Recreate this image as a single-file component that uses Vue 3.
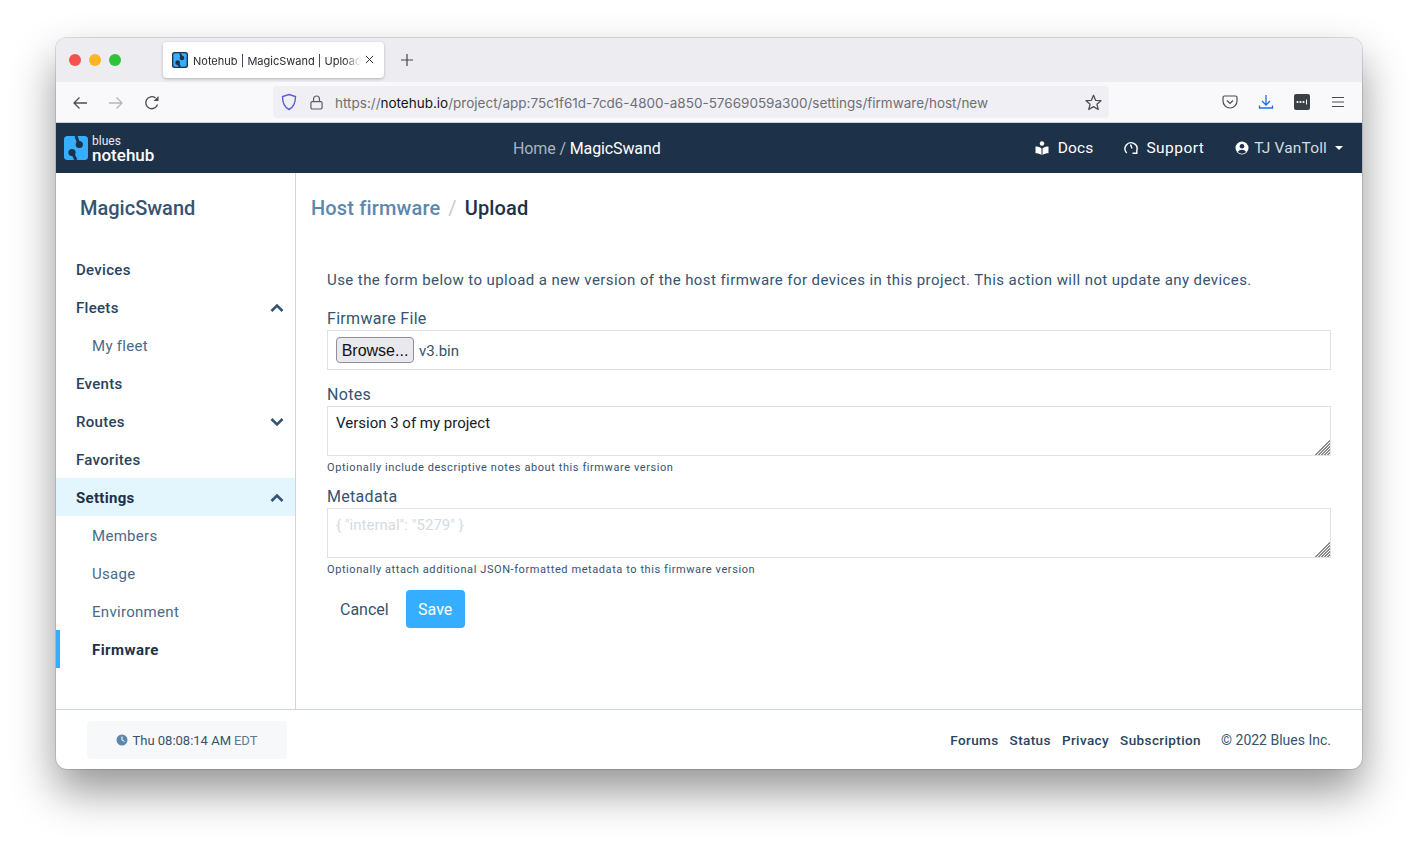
<template>
  <div class="stage">
    <div class="window">
      <div class="tabbar">
        <div class="lights">
          <span class="light red"></span>
          <span class="light yellow"></span>
          <span class="light green"></span>
        </div>
        <div class="tab">
          <svg class="favicon" viewBox="0 0 24 24">
            <rect width="24" height="24" rx="4" fill="#1d3149" />
            <rect x="2" y="2" width="20" height="20" rx="3" fill="#35aeff" />
            <path d="M12 2L15 8.500M8 16L12 22" stroke="#1d3149" stroke-width="3" fill="none" />
            <circle cx="15" cy="9" r="3.500" fill="#1d3149" />
            <circle cx="8.500" cy="16" r="3.500" fill="#1d3149" />
          </svg>
          <span class="tab-title">Notehub | MagicSwand | Upload</span>
          <svg class="tab-close" viewBox="0 0 10 10">
            <path d="M1 1L9 9M9 1L1 9" stroke="#2b2a33" stroke-width="1.100" fill="none" />
          </svg>
        </div>
        <svg class="new-tab" viewBox="0 0 12 12">
          <path d="M6 0V12M0 6H12" stroke="#45444d" stroke-width="1.200" fill="none" />
        </svg>
      </div>

      <div class="toolbar">
        <svg class="tool-icon back" viewBox="0 0 16 16">
          <path d="M15 8H2M7.500 2.500L2 8L7.500 13.500" stroke="#4d4c55" stroke-width="1.300" fill="none" />
        </svg>
        <svg class="tool-icon forward" viewBox="0 0 16 16">
          <path d="M1 8H14M8.500 2.500L14 8L8.500 13.500" stroke="#b5b5ba" stroke-width="1.300" fill="none" />
        </svg>
        <svg class="tool-icon reload" viewBox="0 0 16 16">
          <path d="M13.500 9.500A6 6 0 1 1 11.500 3" stroke="#4d4c55" stroke-width="1.300" fill="none" />
          <path d="M14.500 1V6H9.500Z" fill="#4d4c55" />
        </svg>
        <div class="urlbar">
          <svg class="shield" viewBox="0 0 16 18">
            <path d="M8 1.500L14.500 3.500C14.500 10 13 14 8 16.500C3 14 1.500 10 1.500 3.500Z" stroke="#5b5bd6" stroke-width="1.400" fill="none" />
          </svg>
          <svg class="lock" viewBox="0 0 14 16">
            <rect x="1" y="7" width="12" height="8" rx="1.500" stroke="#5b5b66" stroke-width="1.300" fill="none" />
            <path d="M3.800 7V4.200A3.200 3.200 0 0 1 10.200 4.200V7" stroke="#5b5b66" stroke-width="1.300" fill="none" />
          </svg>
          <span class="url"><span class="dim">https://</span>notehub.io<span class="dim">/project/app:75c1f61d-7cd6-4800-a850-57669059a300/settings/firmware/host/new</span></span>
          <svg class="star" viewBox="0 0 16 16">
            <path d="M8 1.200L10 5.900L15 6.300L11.200 9.600L12.400 14.600L8 11.900L3.600 14.600L4.800 9.600L1 6.300L6 5.900Z" stroke="#4d4c55" stroke-width="1.200" stroke-linejoin="round" fill="none" />
          </svg>
        </div>
        <div class="tool-right">
          <svg class="right-icon" viewBox="0 0 16 16">
            <path d="M2.500 2H13.500A1.500 1.500 0 0 1 15 3.500V7A7 7 0 0 1 1 7V3.500A1.500 1.500 0 0 1 2.500 2Z" stroke="#4d4c55" stroke-width="1.200" fill="none" />
            <path d="M5 6.500L8 9.500L11 6.500" stroke="#4d4c55" stroke-width="1.200" fill="none" />
          </svg>
          <svg class="right-icon" viewBox="0 0 16 16">
            <path d="M8 1V10.500M4 7L8 11L12 7" stroke="#1f6ef0" stroke-width="1.300" fill="none" />
            <path d="M1.500 11.500V14H14.500V11.500" stroke="#1f6ef0" stroke-width="1.300" fill="none" />
          </svg>
          <svg class="right-icon" viewBox="0 0 16 16">
            <rect width="16" height="16" rx="2" fill="#3b4047" />
            <circle cx="3.500" cy="8" r="1.100" fill="#fff" />
            <circle cx="6.500" cy="8" r="1.100" fill="#fff" />
            <circle cx="9.500" cy="8" r="1.100" fill="#fff" />
            <path d="M12.500 5.500V10.500" stroke="#fff" stroke-width="1" />
          </svg>
          <svg class="right-icon" viewBox="0 0 16 16">
            <path d="M2 3.500H14M2 8H14M2 12.500H14" stroke="#4d4c55" stroke-width="1.200" fill="none" />
          </svg>
        </div>
      </div>

      <header class="topnav">
        <div class="brand">
          <svg class="brand-logo" viewBox="0 0 24 24">
            <rect width="24" height="24" rx="3.500" fill="#35aeff" />
            <path d="M12 0L15 8.500M8 16L12 24" stroke="#1d3149" stroke-width="3" fill="none" />
            <circle cx="15.300" cy="8.500" r="3.600" fill="#1d3149" />
            <circle cx="8" cy="16.500" r="3.600" fill="#1d3149" />
          </svg>
          <div class="brand-text">
            <span class="brand-top">blues</span>
            <span class="brand-name">notehub</span>
          </div>
        </div>
        <div class="crumb"><span class="crumb-home">Home / </span>MagicSwand</div>
        <nav class="top-links">
          <a class="top-link docs">
            <svg class="top-icon" viewBox="0 0 14 14">
              <circle cx="7" cy="2.500" r="2.200" fill="#fff" />
              <path d="M0.500 5.500C3 5.500 5 6 6.500 7.500V14C5 12.800 3 12.200 0.500 12.200ZM13.500 5.500C11 5.500 9 6 7.500 7.500V14C9 12.800 11 12.200 13.500 12.200Z" fill="#fff" />
            </svg>
            Docs
          </a>
          <a class="top-link support">
            <svg class="top-icon" viewBox="0 0 14 14">
              <path d="M2.800 12A6 6 0 1 1 12.800 9.500V12.300H8.500" stroke="#fff" stroke-width="1.400" fill="none" />
              <path d="M6.500 3.500L8 7.500" stroke="#fff" stroke-width="1.400" fill="none" />
            </svg>
            Support
          </a>
          <a class="top-link user">
            <svg class="top-icon" viewBox="0 0 14 14">
              <circle cx="7" cy="7" r="6.500" fill="#fff" />
              <circle cx="7" cy="5.300" r="2.300" fill="#1d3149" />
              <path d="M2.800 11A4.600 3.600 0 0 1 11.200 11A6 6 0 0 1 2.800 11Z" fill="#1d3149" />
            </svg>
            TJ VanToll
            <span class="caret"></span>
          </a>
        </nav>
      </header>

      <div class="body">
        <aside class="sidebar">
          <div class="project">MagicSwand</div>
          <ul class="menu">
            <li
              v-for="item in menu"
              :key="item.label"
              class="menu-item"
              :class="{ sub: item.sub, open: item.active, current: item.current }"
            >
              <span>{{ item.label }}</span>
              <svg v-if="item.chevron" class="chevron" viewBox="0 0 14 10">
                <path :d="item.chevron === 'up' ? 'M1.500 8L7 2.500L12.500 8' : 'M1.500 2L7 7.500L12.500 2'" stroke="#36536f" stroke-width="2.600" fill="none" />
              </svg>
            </li>
          </ul>
        </aside>

        <main class="content">
          <h1 class="page-title">
            <span class="title-link">Host firmware</span>
            <span class="title-sep">/</span>
            <span>Upload</span>
          </h1>
          <p class="intro">Use the form below to upload a new version of the host firmware for devices in this project. This action will not update any devices.</p>

          <form class="form" @submit.prevent>
            <label class="field-label">Firmware File</label>
            <div class="file-box">
              <button type="button" class="browse">Browse...</button>
              <span class="file-name">v3.bin</span>
            </div>

            <label class="field-label">Notes</label>
            <textarea class="area" v-model="notes" spellcheck="false"></textarea>
            <small class="hint">Optionally include descriptive notes about this firmware version</small>

            <label class="field-label">Metadata</label>
            <textarea class="area" placeholder="{ &quot;internal&quot;: &quot;5279&quot; }" spellcheck="false"></textarea>
            <small class="hint">Optionally attach additional JSON-formatted metadata to this firmware version</small>

            <div class="actions">
              <button type="button" class="cancel">Cancel</button>
              <button type="submit" class="save">Save</button>
            </div>
          </form>
        </main>
      </div>

      <footer class="footer">
        <div class="clock">
          <svg class="clock-icon" viewBox="0 0 12 12">
            <circle cx="6" cy="6" r="5.500" fill="#5d87ab" />
            <path d="M6 2.500V6L8.500 7.500" stroke="#fff" stroke-width="1" fill="none" />
          </svg>
          <span>Thu 08:08:14 AM</span>
          <span class="zone">EDT</span>
        </div>
        <div class="foot-links">
          <a>Forums</a>
          <a>Status</a>
          <a>Privacy</a>
          <a>Subscription</a>
          <span class="copy">© 2022 Blues Inc.</span>
        </div>
      </footer>
    </div>
  </div>
</template>

<script setup>
import { ref } from 'vue'

const notes = ref('Version 3 of my project')

const menu = [
  { label: 'Devices' },
  { label: 'Fleets', chevron: 'up' },
  { label: 'My fleet', sub: true },
  { label: 'Events' },
  { label: 'Routes', chevron: 'down' },
  { label: 'Favorites' },
  { label: 'Settings', chevron: 'up', active: true },
  { label: 'Members', sub: true },
  { label: 'Usage', sub: true },
  { label: 'Environment', sub: true },
  { label: 'Firmware', sub: true, current: true }
]
</script>

<style>
html,
body {
  background: #fff;
}
</style>

<style scoped>
.stage {
  width: 1418px;
  height: 843px;
  padding: 38px 56px 74px;
  box-sizing: border-box;
  overflow: hidden;
  background: #fff;
  font-family: Roboto, 'Liberation Sans', sans-serif;
}

.window {
  display: flex;
  flex-direction: column;
  height: 731px;
  border-radius: 11px;
  overflow: hidden;
  background: #fff;
  box-shadow: 0 0 0 1px rgba(0, 0, 0, 0.12), 0 22px 44px rgba(0, 0, 0, 0.42);
}

.tabbar {
  display: flex;
  align-items: center;
  height: 44px;
  background: #edecf1;
  flex: none;
}

.lights {
  display: flex;
  gap: 8px;
  margin: 0 0 0 13px;
  width: 94px;
}

.light {
  width: 12px;
  height: 12px;
  border-radius: 50%;
}

.red { background: #f4524d; }
.yellow { background: #fdb526; }
.green { background: #2fc33c; }

.tab {
  display: flex;
  align-items: center;
  width: 221px;
  height: 36px;
  padding: 0 8px 0 9px;
  box-sizing: border-box;
  background: #fff;
  border-radius: 4px;
  box-shadow: 0 1px 3px rgba(0, 0, 0, 0.25);
}

.favicon {
  width: 16px;
  height: 16px;
  flex: none;
}

.tab-title {
  flex: 1;
  margin-left: 5px;
  padding-top: 2px;
  overflow: hidden;
  white-space: nowrap;
  font-family: Inter, sans-serif;
  font-size: 11px;
  color: #2b2a33;
  -webkit-mask-image: linear-gradient(to right, #000 90%, transparent);
  mask-image: linear-gradient(to right, #000 90%, transparent);
}

.tab-close {
  width: 9px;
  height: 9px;
  margin: 0 2px 1px 4px;
  flex: none;
}

.new-tab {
  width: 12px;
  height: 12px;
  margin-left: 17px;
}

.toolbar {
  display: flex;
  align-items: center;
  height: 41px;
  padding-left: 16px;
  background: #f9f9fb;
  border-bottom: 1px solid #cfcfd3;
  box-sizing: border-box;
  flex: none;
}

.tool-icon {
  width: 16px;
  height: 16px;
  margin: 1px 20px 0 0;
  flex: none;
}

.urlbar {
  display: flex;
  align-items: center;
  width: 836px;
  height: 32px;
  margin-left: 93px;
  padding: 0 7px 0 8px;
  box-sizing: border-box;
  background: #f0f0f4;
  border-radius: 4px;
}

.shield {
  width: 16px;
  height: 18px;
  flex: none;
}

.lock {
  width: 13px;
  height: 15px;
  margin-left: 13px;
  flex: none;
}

.url {
  flex: 1;
  margin-left: 12px;
  padding-top: 1px;
  font-family: Inter, sans-serif;
  font-size: 13.5px;
  white-space: nowrap;
  color: #15141a;
}

.dim {
  color: #6e6e76;
}

.star {
  width: 17px;
  height: 17px;
  flex: none;
}

.tool-right {
  display: flex;
  align-items: center;
  gap: 20px;
  margin-left: 113px;
}

.right-icon {
  width: 16px;
  height: 16px;
}

.topnav {
  display: flex;
  align-items: center;
  height: 50px;
  background: #1d3149;
  color: #fff;
  flex: none;
}

.brand {
  display: flex;
  align-items: center;
  width: 457px;
  padding-left: 8px;
  box-sizing: border-box;
}

.brand-logo {
  width: 24px;
  height: 24px;
}

.brand-text {
  display: flex;
  flex-direction: column;
  margin: 2px 0 0 4px;
  line-height: 13px;
}

.brand-top {
  font-size: 12px;
  font-weight: 400;
  color: #e8edf2;
}

.brand-name {
  font-size: 17px;
  font-weight: 500;
  line-height: 15px;
}

.crumb {
  font-size: 16px;
  letter-spacing: -0.12px;
}

.crumb-home {
  color: #a9b4c0;
}

.top-links {
  display: flex;
  align-items: center;
  margin-left: auto;
  padding-right: 19px;
  font-size: 15.5px;
  letter-spacing: 0.15px;
}

.top-link {
  display: flex;
  align-items: center;
  margin-left: 31px;
}

.top-icon {
  width: 14px;
  height: 14px;
}

.docs .top-icon {
  margin-right: 9px;
}

.support {
  letter-spacing: 0.45px;
}

.support .top-icon {
  margin-right: 8px;
}

.user {
  color: #d4dbe2;
}

.user .top-icon {
  margin-right: 5px;
}

.caret {
  width: 0;
  height: 0;
  margin-left: 8px;
  border: 4px solid transparent;
  border-top-color: #fff;
  border-bottom: 0;
}

.body {
  display: flex;
  flex: 1;
  min-height: 0;
}

.sidebar {
  width: 240px;
  border-right: 1px solid #cdd6df;
  box-sizing: border-box;
  flex: none;
}

.project {
  padding: 23px 0 0 24px;
  font-size: 20px;
  line-height: 24px;
  font-weight: 500;
  color: #36536f;
}

.menu {
  list-style: none;
  margin: 30px 0 0;
  padding: 0;
}

.menu-item {
  display: flex;
  align-items: center;
  justify-content: space-between;
  height: 38px;
  padding: 2px 11px 0 20px;
  box-sizing: border-box;
  font-size: 15px;
  font-weight: 500;
  letter-spacing: 0.3px;
  color: #2a435d;
}

.menu-item.sub {
  padding-left: 36px;
  font-weight: 400;
  color: #4a6a88;
}

.menu-item.open {
  background: #e3f6fe;
  font-weight: 700;
  color: #1d3149;
}

.menu-item.current {
  padding-left: 32px;
  border-left: 4px solid #35aeff;
  font-weight: 700;
  letter-spacing: 0.45px;
  color: #1d3149;
}

.chevron {
  width: 14px;
  height: 10px;
}

.content {
  flex: 1;
  min-width: 0;
  padding: 23px 31px 0 15px;
}

.page-title {
  margin: 0;
  font-size: 20px;
  line-height: 24px;
  font-weight: 500;
  letter-spacing: 0.15px;
  color: #1d3149;
}

.title-link {
  color: #5d87ab;
}

.title-sep {
  margin: 0 8px;
  font-weight: 400;
  color: #c3ccd5;
}

.intro {
  margin: 51px 0 0 16px;
  font-size: 15px;
  line-height: 18px;
  letter-spacing: 0.42px;
  color: #36536f;
}

.form {
  display: flex;
  flex-direction: column;
  margin: 20px 0 0 16px;
}

.field-label {
  height: 21px;
  font-size: 16px;
  line-height: 20px;
  letter-spacing: 0.3px;
  color: #36536f;
}

.file-box {
  display: flex;
  align-items: center;
  height: 40px;
  margin-bottom: 15px;
  padding: 0 8px;
  box-sizing: border-box;
  border: 1px solid #dde3e9;
}

.browse {
  width: 78px;
  height: 26px;
  padding: 1px 0 0;
  font-family: 'Liberation Sans', sans-serif;
  font-size: 16px;
  color: #111;
  background: #e9e9ed;
  border: 1px solid #8f8f9d;
  border-radius: 4px;
}

.file-name {
  margin-left: 5px;
  padding-top: 2px;
  font-size: 15px;
  color: #36536f;
}

.area {
  display: block;
  width: 100%;
  height: 50px;
  padding: 7px 8px;
  box-sizing: border-box;
  border: 1px solid #dde3e9;
  border-radius: 0;
  outline: none;
  resize: vertical;
  font-family: Roboto, sans-serif;
  font-size: 15px;
  line-height: 18px;
  color: #15202b;
}

.area::placeholder {
  color: #d5dbe1;
}

.area::-webkit-resizer {
  background:
    linear-gradient(135deg, #fff 50%, transparent 50%),
    repeating-linear-gradient(135deg, #8a8a8a 0 1px, transparent 1px 2.1px);
}

.hint {
  height: 18px;
  margin: 3px 0 10px;
  font-size: 11px;
  line-height: 18px;
  letter-spacing: 0.58px;
  color: #36536f;
}

.actions {
  display: flex;
  align-items: center;
  margin-top: 1px;
}

.cancel,
.save {
  height: 38px;
  font-family: Roboto, sans-serif;
  font-size: 16px;
  border: 0;
  border-radius: 4px;
}

.cancel {
  padding: 0 13px;
  color: #36536f;
  background: transparent;
}

.save {
  width: 59px;
  margin-left: 4px;
  padding: 0;
  color: #fff;
  background: #35aeff;
}

.footer {
  display: flex;
  align-items: center;
  justify-content: space-between;
  height: 60px;
  padding: 0 31px;
  border-top: 1px solid #cdd6df;
  box-sizing: border-box;
  flex: none;
}

.clock {
  display: flex;
  align-items: center;
  justify-content: center;
  gap: 4px;
  width: 200px;
  height: 38px;
  padding-top: 1px;
  box-sizing: border-box;
  background: #f7f8f9;
  border-radius: 4px;
  font-size: 13px;
  color: #36536f;
}

.clock-icon {
  width: 12px;
  height: 12px;
  margin-bottom: 1px;
}

.zone {
  margin-left: -1px;
  color: #5d7a96;
}

.foot-links {
  display: flex;
  align-items: center;
  gap: 11px;
  font-size: 13.5px;
  font-weight: 500;
  letter-spacing: 0.4px;
  color: #2a435d;
}

.copy {
  margin-left: 9px;
  font-size: 14px;
  font-weight: 400;
  letter-spacing: 0;
  color: #36536f;
}
</style>
